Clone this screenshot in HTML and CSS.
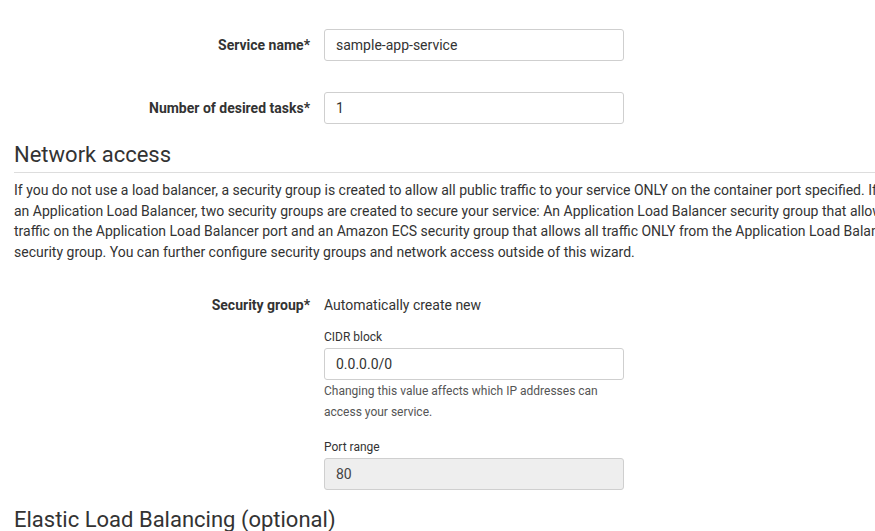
FILE: index.html
```html
<!DOCTYPE html>
<html lang="en">
<head>
<meta charset="utf-8">
<title>Configure service</title>
<link rel="stylesheet" href="styles.css">
</head>
<body>
<div class="page">
  <div class="form-row">
    <label class="form-label" for="svc">Service name*</label>
    <div class="form-control"><input id="svc" class="text-input" type="text" value="sample-app-service"></div>
  </div>
  <div class="form-row">
    <label class="form-label" for="tasks">Number of desired tasks*</label>
    <div class="form-control"><input id="tasks" class="text-input" type="text" value="1"></div>
  </div>

  <h2 class="section-title">Network access</h2>
  <p class="section-desc">If you do not use a load balancer, a security group is created to allow all public traffic to your service ONLY on the container port specified. If you use an Application Load Balancer, two security groups are created to secure your service: An Application Load Balancer security group that allows all traffic on the Application Load Balancer port and an Amazon ECS security group that allows all traffic ONLY from the Application Load Balancer security group. You can further configure security groups and network access outside of this wizard.</p>

  <div class="form-row form-row-sg">
    <div class="form-label">Security group*</div>
    <div class="form-control">
      <div class="static-value">Automatically create new</div>
      <div class="sub-field">
        <label class="sub-label" for="cidr">CIDR block</label>
        <input id="cidr" class="text-input" type="text" value="0.0.0.0/0">
        <div class="help-text">Changing this value affects which IP addresses can access your service.</div>
      </div>
      <div class="sub-field">
        <label class="sub-label" for="port">Port range</label>
        <input id="port" class="text-input text-input-disabled" type="text" value="80" disabled>
      </div>
    </div>
  </div>

  <h2 class="section-title section-title-elb">Elastic Load Balancing (optional)</h2>
</div>
</body>
</html>
```

FILE: styles.css
```css
html, body {
  margin: 0;
  padding: 0;
  background: #ffffff;
  overflow: hidden;
}

body {
  font-family: Roboto, "Liberation Sans", Arial, sans-serif;
  font-size: 14px;
  color: #333333;
}

.page {
  padding: 29px 0 0 14px;
  width: 940px;
}

.form-row {
  display: grid;
  grid-template-columns: 296px 300px;
  column-gap: 14px;
  align-items: center;
  margin-bottom: 31px;
}

.form-label {
  text-align: right;
  font-weight: 700;
  color: #333333;
}

.text-input {
  box-sizing: border-box;
  width: 300px;
  height: 32px;
  border: 1px solid #cfcfcf;
  border-radius: 3px;
  padding: 0 11px;
  font-family: inherit;
  font-size: 14px;
  color: #333333;
  background: #ffffff;
  outline: none;
  display: block;
}

.text-input-disabled {
  background: #eeeeee;
  color: #444444;
}

.section-title {
  margin: 0;
  font-size: 22px;
  font-weight: 400;
  color: #333333;
  line-height: 28px;
  padding-bottom: 3px;
  border-bottom: 1px solid #dddddd;
  margin-top: -14px;
  width: 861px;
}

.section-desc {
  margin: 7px 0 0 0;
  line-height: 20.7px;
  width: 920px;
}

.form-row-sg {
  margin-top: 32px;
  margin-bottom: 0;
  align-items: start;
}

.form-row-sg .form-label {
  line-height: 20px;
}

.static-value {
  line-height: 20px;
}

.sub-field {
  margin-top: 14px;
}

.sub-field + .sub-field {
  margin-top: 16px;
}

.sub-label {
  display: block;
  font-size: 12px;
  line-height: 16px;
  margin-bottom: 3px;
}

.help-text {
  font-size: 12px;
  line-height: 21px;
  color: #555555;
  margin-top: 1px;
}

.section-title-elb {
  margin-top: 16px;
  border-bottom: none;
}
```
